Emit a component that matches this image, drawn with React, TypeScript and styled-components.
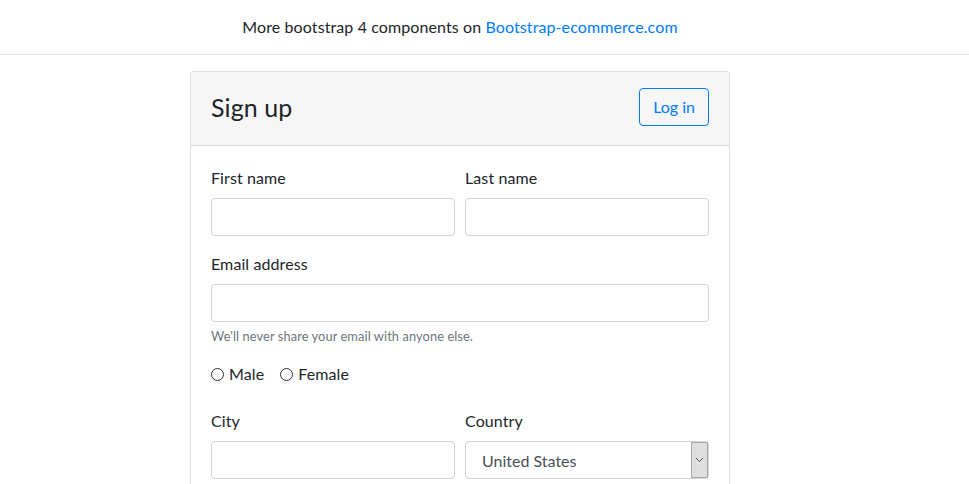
import React from "react";
import styled, { createGlobalStyle } from "styled-components";

const GlobalStyle = createGlobalStyle`
  html, body {
    margin: 0;
    padding: 0;
    background: #fff;
    color: #212529;
    font-family: Lato, "Liberation Sans", sans-serif;
    font-size: 16px;
    line-height: 1.5;
  }
  * { box-sizing: border-box; }
`;

export default function App() {
  return (
    <>
      <GlobalStyle />
      <TopBar>
        <Inner>
          More bootstrap 4 components on <Link href="#">Bootstrap-ecommerce.com</Link>
        </Inner>
      </TopBar>

      <Inner>
        <Card>
          <CardHeader>
            <Title>Sign up</Title>
            <OutlineBtn type="button">Log in</OutlineBtn>
          </CardHeader>

          <CardBody>
            <FormRow>
              <Group>
                <Label>First name</Label>
                <Input type="text" />
              </Group>
              <Group>
                <Label>Last name</Label>
                <Input type="text" />
              </Group>
            </FormRow>

            <Group>
              <Label>Email address</Label>
              <Input type="email" />
              <Help>We'll never share your email with anyone else.</Help>
            </Group>

            <RadioRow>
              <RadioLabel>
                <Radio type="radio" name="gender" />
                Male
              </RadioLabel>
              <RadioLabel>
                <Radio type="radio" name="gender" />
                Female
              </RadioLabel>
            </RadioRow>

            <FormRow>
              <Group>
                <Label>City</Label>
                <Input type="text" />
              </Group>
              <Group>
                <Label>Country</Label>
                <SelectWrap>
                  <Select defaultValue="us">
                    <option value="us">United States</option>
                    <option value="uk">United Kingdom</option>
                    <option value="ru">Russia</option>
                  </Select>
                  <SelectArrow>
                    <svg width="9" height="6" viewBox="0 0 9 6">
                      <path d="M1 1l3.5 3.5L8 1" fill="none" stroke="#555" strokeWidth="1" />
                    </svg>
                  </SelectArrow>
                </SelectWrap>
              </Group>
            </FormRow>
          </CardBody>
        </Card>
      </Inner>
    </>
  );
}

const TopBar = styled.div`
  border-bottom: 1px solid #e2e2e2;
  padding: 15px 0;
`;

const Inner = styled.div`
  width: 920px;
  text-align: center;
  letter-spacing: 0.1px;
`;

const Link = styled.a`
  color: #007bff;
  text-decoration: none;
`;

const Card = styled.div`
  width: 540px;
  margin: 16px auto 0;
  border: 1px solid rgba(0, 0, 0, 0.125);
  border-radius: 4px;
  text-align: left;
  background: #fff;
`;

const CardHeader = styled.div`
  display: flex;
  align-items: center;
  justify-content: space-between;
  height: 74px;
  padding: 0 20px 3px;
  background: #f6f6f6;
  border-bottom: 1px solid rgba(0, 0, 0, 0.125);
  border-radius: 3px 3px 0 0;
`;

const Title = styled.h4`
  margin: 0;
  font-size: 25px;
  font-weight: 400;
  line-height: 1.2;
`;

const OutlineBtn = styled.button`
  font-family: inherit;
  font-size: 16px;
  line-height: 24px;
  padding: 6px 13px;
  color: #007bff;
  background: transparent;
  border: 1px solid #007bff;
  border-radius: 4px;
`;

const CardBody = styled.div`
  padding: 20px;
`;

const FormRow = styled.div`
  display: grid;
  grid-template-columns: 1fr 1fr;
  column-gap: 10px;
`;

const Group = styled.div`
  margin-bottom: 16px;
`;

const Label = styled.label`
  display: block;
  margin-bottom: 8px;
`;

const Input = styled.input`
  display: block;
  width: 100%;
  height: 38px;
  padding: 6px 12px;
  font-family: inherit;
  font-size: 16px;
  color: #495057;
  border: 1px solid #ced4da;
  border-radius: 4px;
  outline: none;
`;

const Help = styled.small`
  display: block;
  margin-top: 5px;
  font-size: 12.8px;
  color: #6c757d;
`;

const RadioRow = styled.div`
  display: flex;
  gap: 16px;
  margin-bottom: 23px;
`;

const RadioLabel = styled.label`
  display: flex;
  align-items: center;
  gap: 5px;
`;

const Radio = styled.input`
  appearance: none;
  width: 13px;
  height: 13px;
  margin: 0;
  border: 1px solid #333;
  border-radius: 50%;
  background: #fff;
`;

const SelectWrap = styled.div`
  position: relative;
`;

const Select = styled.select`
  appearance: none;
  display: block;
  width: 100%;
  height: 38px;
  padding: 6px 16px;
  font-family: inherit;
  font-size: 16px;
  color: #495057;
  background: #fff;
  border: 1px solid #ced4da;
  border-radius: 4px;
  outline: none;
`;

const SelectArrow = styled.div`
  position: absolute;
  top: 1px;
  right: 1px;
  bottom: 1px;
  width: 17px;
  display: flex;
  align-items: center;
  justify-content: center;
  background: #dedede;
  border: 1px solid #a9a9a9;
  pointer-events: none;
`;
